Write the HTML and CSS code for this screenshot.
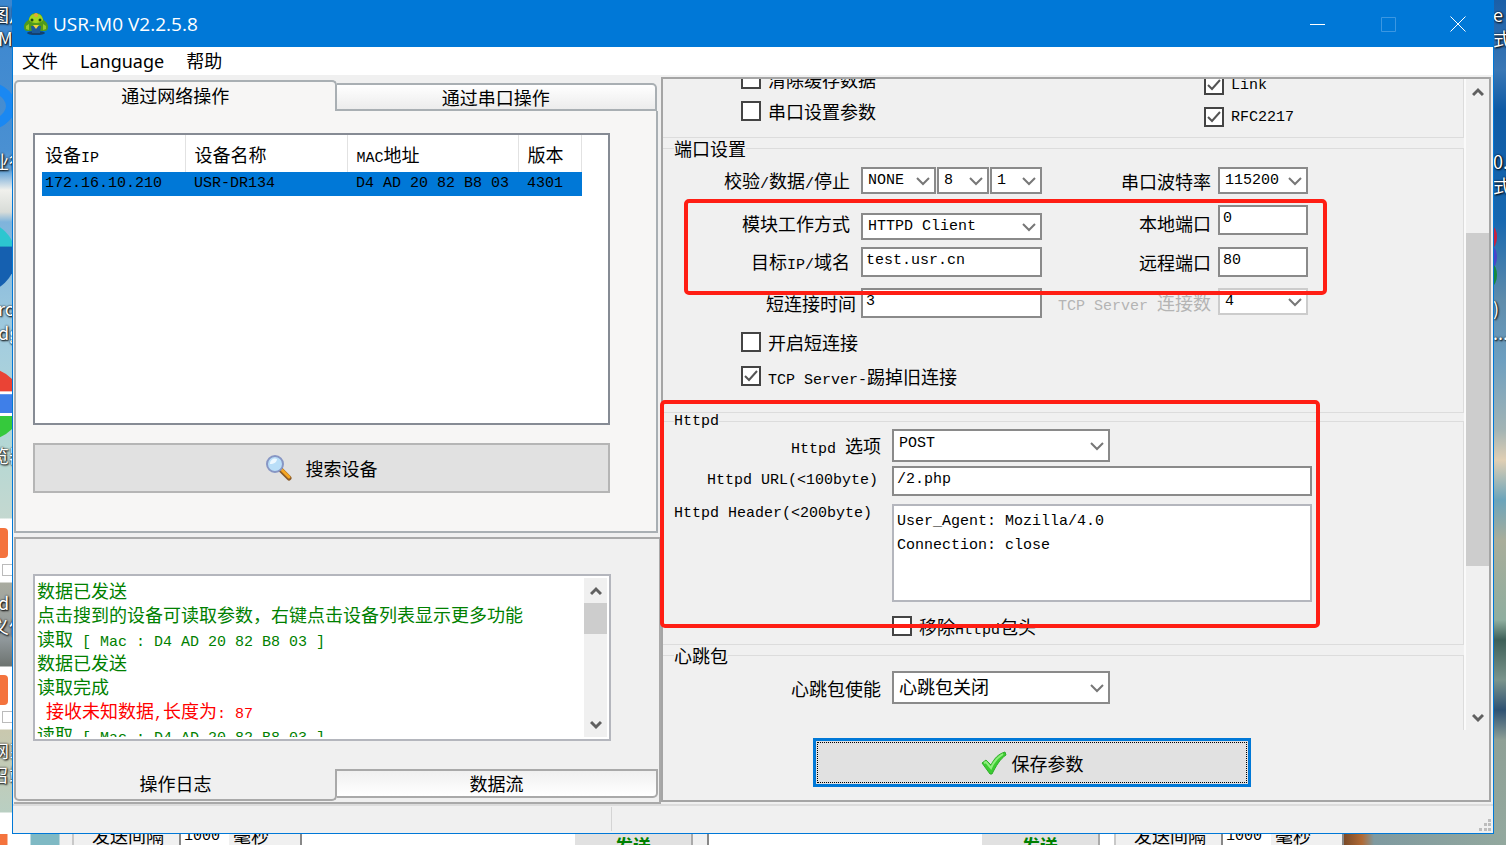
FILE: index.html
```html
<!DOCTYPE html>
<html lang="zh-CN">
<head>
    <meta charset="utf-8">
    <title>USR-M0 V2.2.5.8</title>
    <link rel="stylesheet" href="styles.css">
</head>
<body>
<div class="desktop">
    <div class="strip strip-left">
        <span class="disc disc-blue"></span>
        <span class="disc disc-edge"></span>
        <span class="disc disc-chrome"></span>
        <span class="card card-1"></span>
        <span class="card card-2"></span>
        <span class="box box-1"></span>
        <span class="box box-2"></span>
        <span class="name name-1">图片</span>
        <span class="name name-2 latin">M</span>
        <span class="name name-3">业行</span>
        <span class="name name-4 latin">roc<br>dge</span>
        <span class="name name-5">览器</span>
        <span class="name name-6 latin">d</span>
        <span class="name name-7">义件</span>
        <span class="name name-8">网系<br>召站</span>
    </div>

    <div class="window">
        <div class="titlebar">
            <svg class="logo" viewBox="0 0 24 24" width="24" height="24">
                <ellipse cx="12" cy="21" rx="9" ry="2" fill="#14406e"/>
                <path d="M0 15c0-5 4-6 5-8 1-4 3-6 7-6s6 2 7 6c1 2 5 3 5 8 0 3-2 4-3 4H3c-1 0-3-1-3-4z" fill="#4f9a1c"/>
                <path d="M5 8c1-5 3-6 7-6s6 1 7 6c-2 4-12 4-14 0z" fill="#a5d61e"/>
                <circle cx="12" cy="3" r="2" fill="#e8a53a"/>
                <circle cx="8" cy="8" r="1.500" fill="#174d18"/>
                <circle cx="16" cy="8" r="1.500" fill="#174d18"/>
                <path d="M7 14h10l-1 7H8z" fill="#1b5a9a"/>
                <path d="M9 13h6l-3 4z" fill="#f0d23c"/>
                <path d="M2 14l3-2v6l-3-1zM22 14l-3-2v6l3-1z" fill="#9ac92c"/>
            </svg>
            <span class="title">USR-M0 V2.2.5.8</span>
            <button class="winbtn" type="button" aria-label="minimize"><svg width="16" height="16"><path d="M0 8.500h15"/></svg></button>
            <button class="winbtn dim" type="button" aria-label="maximize"><svg width="16" height="16"><path d="M1.500 1.500h14v14h-14z"/></svg></button>
            <button class="winbtn" type="button" aria-label="close"><svg width="16" height="16"><path d="M.5.5l15 15M15.500.5l-15 15"/></svg></button>
        </div>
        <div class="menu">
            <button type="button">文件</button>
            <button type="button">Language</button>
            <button type="button">帮助</button>
        </div>

        <div class="main">
            <div class="left">
                <div class="tabs">
                    <button class="tab active" type="button">通过网络操作</button>
                    <button class="tab" type="button">通过串口操作</button>
                </div>
                <div class="page">
                    <div class="list">
                        <table>
                            <thead>
                            <tr>
                                <th class="c1">设备<span class="en">IP</span></th>
                                <th class="c2">设备名称</th>
                                <th class="c3"><span class="en">MAC</span>地址</th>
                                <th class="c4">版本</th>
                            </tr>
                            </thead>
                            <tbody>
                            <tr>
                                <td>172.16.10.210</td>
                                <td>USR-DR134</td>
                                <td>D4 AD 20 82 B8 03</td>
                                <td>4301</td>
                            </tr>
                            </tbody>
                        </table>
                    </div>
                    <button class="search" type="button">
                        <svg viewBox="0 0 26 26" width="26" height="26">
                            <path d="M15 15l8 8" stroke="#8a5a28" stroke-width="5" stroke-linecap="round"/>
                            <path d="M16 15l7 7" stroke="#f5a623" stroke-width="3" stroke-linecap="round"/>
                            <circle cx="9" cy="9" r="8" fill="#b9def8" stroke="#8796c4" stroke-width="2"/>
                            <path d="M4 9a5 5 0 0 1 7-5c0 3-3 5-7 5z" fill="#eef8ff"/>
                        </svg>
                        搜索设备
                    </button>
                </div>

                <div class="logbox">
                    <div class="logwrap">
                        <div class="log">
                            <p>数据已发送</p>
                            <p>点击搜到的设备可读取参数，右键点击设备列表显示更多功能</p>
                            <p>读取<span class="en"> [ Mac : D4 AD 20 82 B8 03 ]</span></p>
                            <p>数据已发送</p>
                            <p>读取完成</p>
                            <p class="err"><span class="en"> </span>接收未知数据<span class="en">,</span>长度为<span class="en">: 87</span></p>
                            <p>读取<span class="en"> [ Mac : D4 AD 20 82 B8 03 ]</span></p>
                        </div>
                        <div class="scrollbar">
                            <svg class="arrow" viewBox="0 0 12 10"><path d="M1 8l5-5 5 5"/></svg>
                            <div class="thumb thumb-log"></div>
                            <svg class="arrow end" viewBox="0 0 12 10"><path d="M1 2l5 5 5-5"/></svg>
                        </div>
                    </div>
                </div>
                <div class="tabs bottom">
                    <button class="tab active" type="button">操作日志</button>
                    <button class="tab" type="button">数据流</button>
                </div>
            </div>

            <form class="right">
                <div class="view">
                    <div class="groups">
                        <fieldset class="checks">
                            <div class="checkcol">
                                <label class="check"><input type="checkbox">清除缓存数据</label>
                                <label class="check"><input type="checkbox">串口设置参数</label>
                            </div>
                            <div class="checkcol low">
                                <label class="check"><input type="checkbox" checked><span class="en">Link</span></label>
                                <label class="check"><input type="checkbox" checked><span class="en">RFC2217</span></label>
                            </div>
                        </fieldset>

                        <fieldset class="port">
                            <legend>端口设置</legend>
                            <div class="row">
                                <label for="parity">校验<span class="en">/</span>数据<span class="en">/</span>停止</label>
                                <div class="trio">
                                    <select id="parity"><option>NONE</option></select>
                                    <select aria-label="数据"><option>8</option></select>
                                    <select aria-label="停止"><option>1</option></select>
                                </div>
                                <label class="second" for="baud">串口波特率</label>
                                <select id="baud"><option>115200</option></select>
                            </div>
                            <div class="row">
                                <label for="mode">模块工作方式</label>
                                <select id="mode" class="low"><option>HTTPD Client</option></select>
                                <label class="second" for="lport">本地端口</label>
                                <input id="lport" type="text" value="0">
                            </div>
                            <div class="row tight">
                                <label for="host">目标<span class="en">IP/</span>域名</label>
                                <input id="host" type="text" value="test.usr.cn">
                                <label class="second" for="rport">远程端口</label>
                                <input id="rport" type="text" value="80">
                            </div>
                            <div class="row">
                                <label class="near" for="ctime">短连接时间</label>
                                <input id="ctime" type="text" value="3">
                                <label class="second off" for="conns"><span class="en">TCP Server </span>连接数</label>
                                <select id="conns" disabled><option>4</option></select>
                            </div>
                            <label class="check"><input type="checkbox">开启短连接</label>
                            <label class="check"><input type="checkbox" checked><span><span class="en">TCP Server-</span>踢掉旧连接</span></label>
                        </fieldset>

                        <fieldset class="httpd">
                            <legend class="en">Httpd</legend>
                            <div class="row wide">
                                <label for="method"><span class="en">Httpd </span>选项</label>
                                <select id="method" class="big"><option>POST</option></select>
                            </div>
                            <div class="row wide">
                                <label class="en" for="url">Httpd URL(&lt;100byte)</label>
                                <input id="url" type="text" value="/2.php">
                            </div>
                            <div class="row wide top">
                                <label class="en" for="header">Httpd Header(&lt;200byte)</label>
                                <textarea id="header">User_Agent: Mozilla/4.0
Connection: close</textarea>
                            </div>
                            <label class="check"><input type="checkbox"><span>移除<span class="en">Httpd</span>包头</span></label>
                        </fieldset>

                        <fieldset class="heart">
                            <legend>心跳包</legend>
                            <div class="row wide">
                                <label for="beat">心跳包使能</label>
                                <select id="beat" class="big zh"><option>心跳包关闭</option></select>
                            </div>
                        </fieldset>
                    </div>
                    <div class="scrollbar">
                        <svg class="arrow" viewBox="0 0 12 10"><path d="M1 8l5-5 5 5"/></svg>
                        <div class="thumb thumb-view"></div>
                        <svg class="arrow end" viewBox="0 0 12 10"><path d="M1 2l5 5 5-5"/></svg>
                    </div>
                </div>
                <button class="save" type="button">
                    <svg viewBox="0 0 26 24" width="26" height="24">
                        <path d="M1 12l4-3 5 5c3-6 7-11 14-13l1 3c-6 4-10 11-14 19H9z" fill="#3ccc32" stroke="#2fae2a"/>
                        <path d="M3 12l2-1 5 6c3-7 7-11 12-14" fill="none" stroke="#8fee7e" stroke-width="2"/>
                    </svg>
                    保存参数
                </button>
                <span class="mark mark-port"></span>
                <span class="mark mark-httpd"></span>
            </form>
        </div>

        <div class="status">
            <span class="cell"></span>
            <svg class="grip" width="12" height="12" fill="#bdbdbd"><path d="M9 0h3v3H9zM9 4h3v3H9zM5 4h3v3H5zM9 9h3v3H9zM5 9h3v3H5zM0 9h3v3H0z"/></svg>
        </div>
    </div>

    <div class="strip strip-right">
        <span class="disc disc-r1"></span>
        <span class="disc disc-r2"></span>
        <span class="disc disc-r3"></span>
        <span class="name name-1">e<br>式</span>
        <span class="name name-3">0...<br>式</span>
        <span class="name name-4">)<br>...</span>
    </div>

    <div class="behind">
        <span class="sea"></span>
        <div class="tool">
            <span class="word">发送间隔</span>
            <span class="num">1000</span>
            <span class="word">毫秒</span>
        </div>
        <span class="blank"></span>
        <span class="send">发送</span>
        <span class="edge"></span>
        <span class="blank"></span>
        <span class="send">发送</span>
        <div class="tool">
            <span class="word">发送间隔</span>
            <span class="num">1000</span>
            <span class="word">毫秒</span>
        </div>
        <span class="shore"></span>
    </div>
</div>
</body>
</html>
```

FILE: styles.css
```css
* {
    box-sizing: border-box;
}

body {
    margin: 0;
    font: 18px/24px "Noto Sans CJK SC", sans-serif;
    color: #000;
}

button, input, select, textarea {
    font: inherit;
    color: inherit;
    margin: 0;
    border-radius: 0;
}

.en {
    font-family: "Liberation Mono", monospace;
    font-size: 15px;
    line-height: 15px;
}

/* desktop behind the window */
.desktop {
    display: grid;
    grid-template-columns: 12px minmax(0, 1fr) 12px;
    grid-template-rows: auto 11px;
    min-height: 100vh;
    overflow: hidden;
}

.strip {
    position: relative;
    overflow: hidden;
}

.strip-left {
    background: linear-gradient(#3b86cf 0, #4a90d2 150px, #6aa6d8 172px, #f0f0ec 190px, #d8dcd8 212px, #7fb4dc 222px, #a5cede 350px, #b5d8d4 450px, #c4d8d0 518px, #fff 519px, #fff 582px, #a9aba0 583px, #8f979a 640px, #6d7370 666px, #fff 667px, #fff 729px, #c9c8ae 730px, #b9cfc2 812px, #fff 813px);
}

.strip-right {
    background: linear-gradient(#1a5fa8 0, #3a77b5 70px, #0f5ba5 110px, #1768b0 220px, #5f8cab 300px, #6d9fc0 360px, #a3b4b4 430px, #e0cfb4 460px, #6ba4ba 500px, #a9ad9a 540px, #8fae9f 620px, #3e6058 640px, #7b948c 680px, #2f5272 710px, #8fa096 740px, #93a89e 834px);
}

.name {
    position: absolute;
    left: -9px;
    width: 60px;
    color: #fff;
    line-height: 24px;
    text-shadow: 1px 1px 2px #000, 0 0 2px #000;
}

.name.latin {
    left: -2px;
}

.strip-right .name {
    left: -1px;
}

.name-1 {
    top: 2px;
}

.name-2 {
    top: 26px;
}

.name-3 {
    top: 149px;
}

.name-4 {
    top: 296px;
}

.name-5 {
    top: 443px;
}

.name-6 {
    top: 590px;
}

.name-7 {
    top: 614px;
}

.name-8 {
    top: 738px;
}

.disc {
    position: absolute;
    border-radius: 50%;
}

.disc-blue {
    left: -60px;
    top: 80px;
    width: 76px;
    height: 52px;
    border: 10px solid #1a88f2;
}

.disc-edge {
    left: -58px;
    top: 221px;
    width: 74px;
    height: 72px;
    background: linear-gradient(#2cc6d0 35%, #1560b0 36%);
}

.disc-chrome {
    left: -50px;
    top: 368px;
    width: 72px;
    height: 72px;
    background: linear-gradient(#ea4335 32%, #fff 33%, #fff 36%, #3f7fe8 37%, #3f7fe8 62%, #fff 63%, #fff 66%, #35c93c 67%);
}

.disc-r1, .disc-r2, .disc-r3 {
    left: -8px;
    width: 11px;
    height: 22px;
    background: #c8213f;
    top: 226px;
}

.disc-r2 {
    top: 246px;
    background: #4a44c8;
}

.disc-r3 {
    top: 264px;
    background: #148a3c;
}

.card {
    position: absolute;
    left: -20px;
    top: 528px;
    width: 28px;
    height: 30px;
    border-radius: 4px;
    background: #f4733d;
}

.card-2 {
    top: 675px;
}

.box {
    position: absolute;
    left: 2px;
    top: 564px;
    width: 12px;
    height: 12px;
    border: 1px solid #bbb;
}

.box-2 {
    top: 711px;
}

/* window frame */
.window {
    border: 1px solid #0078d7;
    border-top: 0;
    background: #f0f0f0;
    display: flex;
    flex-direction: column;
}

.titlebar {
    background: #0078d7;
    color: #fff;
    height: 47px;
    display: flex;
    align-items: center;
    padding-left: 11px;
}

.title {
    flex: 1;
    margin-left: 5px;
    font: 19px/24px "Open Sans", sans-serif;
}

.winbtn {
    width: 70px;
    height: 47px;
    padding: 0;
    border: 0;
    background: none;
    display: flex;
    align-items: center;
    justify-content: center;
}

.winbtn svg {
    fill: none;
    stroke: #fff;
}

.winbtn.dim svg {
    stroke: #3b97e2;
}

.menu {
    display: flex;
    gap: 22px;
    padding: 2px 9px;
    height: 28px;
    background: #fff;
}

.menu button {
    padding: 0;
    border: 0;
    background: none;
    font-family: "Noto Sans", "Noto Sans CJK SC", sans-serif;
    line-height: 24px;
}

.main {
    flex: 1;
    display: flex;
    margin-top: 2px;
    padding: 0 2px 0 1px;
}

/* left side */
.left {
    width: 647px;
    padding-top: 3px;
}

.tabs {
    display: flex;
    height: 31px;
    padding-right: 4px;
}

.tab {
    flex: 1;
    margin-top: 3px;
    padding: 0 0 3px;
    border: 2px solid #a9afb3;
    border-left: 0;
    border-radius: 0 5px 0 0;
    background: linear-gradient(#fff, #ececec);
    line-height: 24px;
}

.tab.active {
    margin-top: 0;
    border-left: 2px solid #a9afb3;
    border-bottom: 0;
    border-radius: 5px 5px 0 0;
    background: #f7f6f5;
}

.page {
    margin-right: 3px;
    padding: 22px 46px 38px 17px;
    border: 2px solid #a9afb3;
    border-top: 0;
    background: #f7f6f5;
}

.list {
    height: 292px;
    padding-left: 7px;
    border: 2px solid #868b94;
    background: #fff;
}

table {
    border-collapse: collapse;
    table-layout: fixed;
    width: 540px;
}

th {
    height: 37px;
    padding: 0 0 0 9px;
    border-right: 1px solid #e2e2e2;
    font-weight: normal;
    text-align: left;
}

td {
    height: 24px;
    padding: 0 0 0 9px;
    background: #0078d7;
    font: 15px/24px "Liberation Mono", monospace;
}

th:first-child, td:first-child {
    padding-left: 3px;
}

.c1 {
    width: 143px;
}

.c2 {
    width: 162px;
}

.c3 {
    width: 171px;
}

.search {
    display: flex;
    align-items: center;
    justify-content: center;
    gap: 14px;
    width: 100%;
    height: 50px;
    margin-top: 18px;
    border: 2px solid #b5b5b5;
    background: #e1e1e1;
}

.search svg {
    fill: none;
}

.logbox {
    margin-top: 4px;
    padding: 35px 48px 28px 17px;
    border: 2px solid #a9a9a9;
    border-bottom: 0;
}

.logwrap {
    display: flex;
    height: 167px;
    padding: 2px;
    border: 2px solid #b4b6bd;
    background: #fff;
}

.log {
    flex: 1;
    overflow: hidden;
    color: #008000;
}

.log p {
    margin: 0;
    height: 24px;
    white-space: pre;
}

.log .err {
    color: #f00;
}

.tabs.bottom {
    height: 35px;
    border: 2px solid #a9a9a9;
    border-width: 0 2px 2px 0;
    padding: 0 1px 1px 0;
}

.bottom .tab {
    margin: 0 0 3px;
    border-color: #a9a9a9;
    border-radius: 0 0 5px 0;
    background: linear-gradient(#f0f0f0, #fff);
}

.bottom .tab.active {
    margin: 0;
    border-top: 0;
    border-bottom: 2px solid #a9a9a9;
    border-radius: 0 0 5px 5px;
    background: #f0f0f0;
}

.scrollbar {
    display: flex;
    flex-direction: column;
    align-items: center;
    width: 23px;
    background: #f0f0f0;
}

.arrow {
    width: 12px;
    height: 10px;
    margin: 8px 0 7px;
    fill: none;
    stroke: #606060;
    stroke-width: 3;
}

.arrow.end {
    margin-top: auto;
}

.thumb {
    width: 23px;
    background: #cdcdcd;
}

.thumb-log {
    height: 31px;
}

.thumb-view {
    height: 333px;
    margin-top: 129px;
}

/* right side */
.right {
    flex: 1;
    position: relative;
    min-width: 0;
    margin-bottom: 2px;
    border: 2px solid #a5a5a5;
}

.view {
    display: flex;
    overflow: hidden;
}

.groups {
    flex: 1;
    min-width: 0;
}

.right .scrollbar {
    width: 25px;
    border-left: 2px solid #fafafa;
}

fieldset {
    margin: 0;
    padding: 0;
    min-width: 0;
    border: 1px solid #dcdcdc;
    border-left: 0;
}

legend {
    margin-left: 11px;
    padding: 0;
    line-height: 18px;
}

.checks {
    display: flex;
    margin-top: -10px;
    padding: 0 0 10px 78px;
    border-top: 0;
}

.checkcol {
    width: 463px;
}

.checkcol .check {
    margin: 0 0 12px;
}

.checkcol .check:last-child {
    margin: 0;
}

.checkcol.low {
    flex: 1;
    padding-top: 6px;
}

.check {
    display: flex;
    align-items: center;
    gap: 7px;
    height: 20px;
    margin: 14px 0 0 78px;
}

.check input {
    appearance: none;
    width: 20px;
    height: 20px;
    border: 2px solid #444;
    background: #fff;
}

.check input:checked {
    background: #fff url("data:image/svg+xml,%3Csvg xmlns='http://www.w3.org/2000/svg' viewBox='0 0 16 16'%3E%3Cpath d='M2 8l4 4 8-9' fill='none' stroke='%23555' stroke-width='2'/%3E%3C/svg%3E");
}

.port {
    margin-top: 1px;
    padding: 10px 0 26px;
}

.row {
    display: grid;
    grid-template-columns: 198px 181px 176px 90px;
    margin-top: 11px;
}

.row:nth-child(2) {
    margin-top: 0;
}

.row.tight {
    margin-top: 7px;
}

.row > label {
    align-self: center;
    padding-right: 11px;
    line-height: 20px;
    text-align: right;
    white-space: nowrap;
}

.row > label.near {
    padding-right: 5px;
}

.row > label.second {
    padding-right: 7px;
}

.off {
    color: #b4b4b4;
}

.row input, .row textarea {
    width: 100%;
    height: 30px;
    padding: 0 3px 3px;
    border: 2px solid #8a8a8a;
    background: #fff;
    font: 15px/24px "Liberation Mono", monospace;
}

.row textarea {
    display: block;
    height: 98px;
    padding-top: 4px;
    border-color: #b4b6bd;
    resize: none;
}

.row select {
    appearance: none;
    width: 100%;
    height: 27px;
    padding: 0 0 0 5px;
    border: 2px solid #8a8a8a;
    background: #fff url("data:image/svg+xml,%3Csvg xmlns='http://www.w3.org/2000/svg' width='14' height='10'%3E%3Cpath d='M1 2l6 6 6-6' fill='none' stroke='%23777' stroke-width='2'/%3E%3C/svg%3E") no-repeat right 4px center;
    font: 15px/20px "Liberation Mono", monospace;
    opacity: 1;
}

.row select:disabled {
    border-color: #ccc;
    color: #000;
}

.row select.low {
    align-self: end;
    margin-top: 8px;
}

.row select.big {
    width: 218px;
    height: 33px;
    padding-bottom: 4px;
}

.row select.zh {
    font: 18px/24px "Noto Sans CJK SC", sans-serif;
}

.trio {
    display: grid;
    grid-template-columns: 75px 52px 52px;
    gap: 1px;
}

.httpd {
    margin-top: 1px;
    padding-bottom: 8px;
}

.row.wide {
    grid-template-columns: 229px 420px;
    margin-top: 4px;
}

.row.wide:nth-child(2) {
    margin-top: 0;
}

.row.wide > label.en {
    padding-right: 14px;
}

.row.wide.top {
    margin-top: 8px;
}

.row.top > label {
    align-self: start;
}

.row.top > label.en {
    padding-right: 20px;
}

.httpd .check {
    margin-left: 229px;
}

.heart {
    margin-top: 1px;
    padding: 7px 0 26px;
    border-bottom: 0;
}

.save {
    display: flex;
    align-items: center;
    justify-content: center;
    gap: 5px;
    width: 438px;
    height: 49px;
    margin: 8px 0 12px 150px;
    border: 3px solid #0078d7;
    background: #e1e1e1;
    outline: 1px dotted #000;
    outline-offset: -5px;
}

.mark {
    position: absolute;
    border: 4px solid #ff1e14;
    border-radius: 5px;
    pointer-events: none;
}

.mark-port {
    left: 21px;
    top: 120px;
    width: 643px;
    height: 96px;
}

.mark-httpd {
    left: -3px;
    top: 321px;
    width: 660px;
    height: 228px;
}

.status {
    display: flex;
    justify-content: space-between;
    align-items: end;
    height: 29px;
    border-top: 2px solid #dcdcdc;
    padding: 2px;
}

.cell {
    width: 597px;
    height: 24px;
    border-right: 1px solid #d4d4d4;
}

/* the other program peeking out under the window */
.behind {
    grid-column: 1 / -1;
    display: flex;
    height: 11px;
    overflow: hidden;
    background: #fff;
    line-height: 18px;
}

.sea {
    width: 72px;
    background: linear-gradient(90deg, #f4733d 7px, #fff 8px, #fff 30px, #7fb9c4 31px, #7fb9c4 59px, #f0f0f0 60px);
}

.tool {
    display: flex;
    width: 230px;
    padding-left: 18px;
    border-left: 2px solid #c8c8c8;
    border-right: 2px solid #888;
    background: #f0f0f0;
}

.word {
    margin-top: -8px;
}

.num {
    width: 50px;
    margin: 0 4px 0 15px;
    padding-left: 3px;
    border-left: 2px solid #888;
    background: #fff;
    font: 15px/6px "Liberation Mono", monospace;
}

.blank {
    flex: 1;
}

.send {
    width: 118px;
    padding-top: 2px;
    background: #e1e1e1;
    border-right: 2px solid #aaa;
    color: #008000;
    font-weight: bold;
    text-align: center;
}

.edge {
    width: 16px;
    background: #f0f0f0;
    border-right: 2px solid #888;
}

.behind .send + .tool {
    margin-left: 14px;
}

.shore {
    width: 162px;
    background: linear-gradient(90deg, #7a4a28, #b06a35 18px, #7f9aa0 30px, #93a89e);
}
```
